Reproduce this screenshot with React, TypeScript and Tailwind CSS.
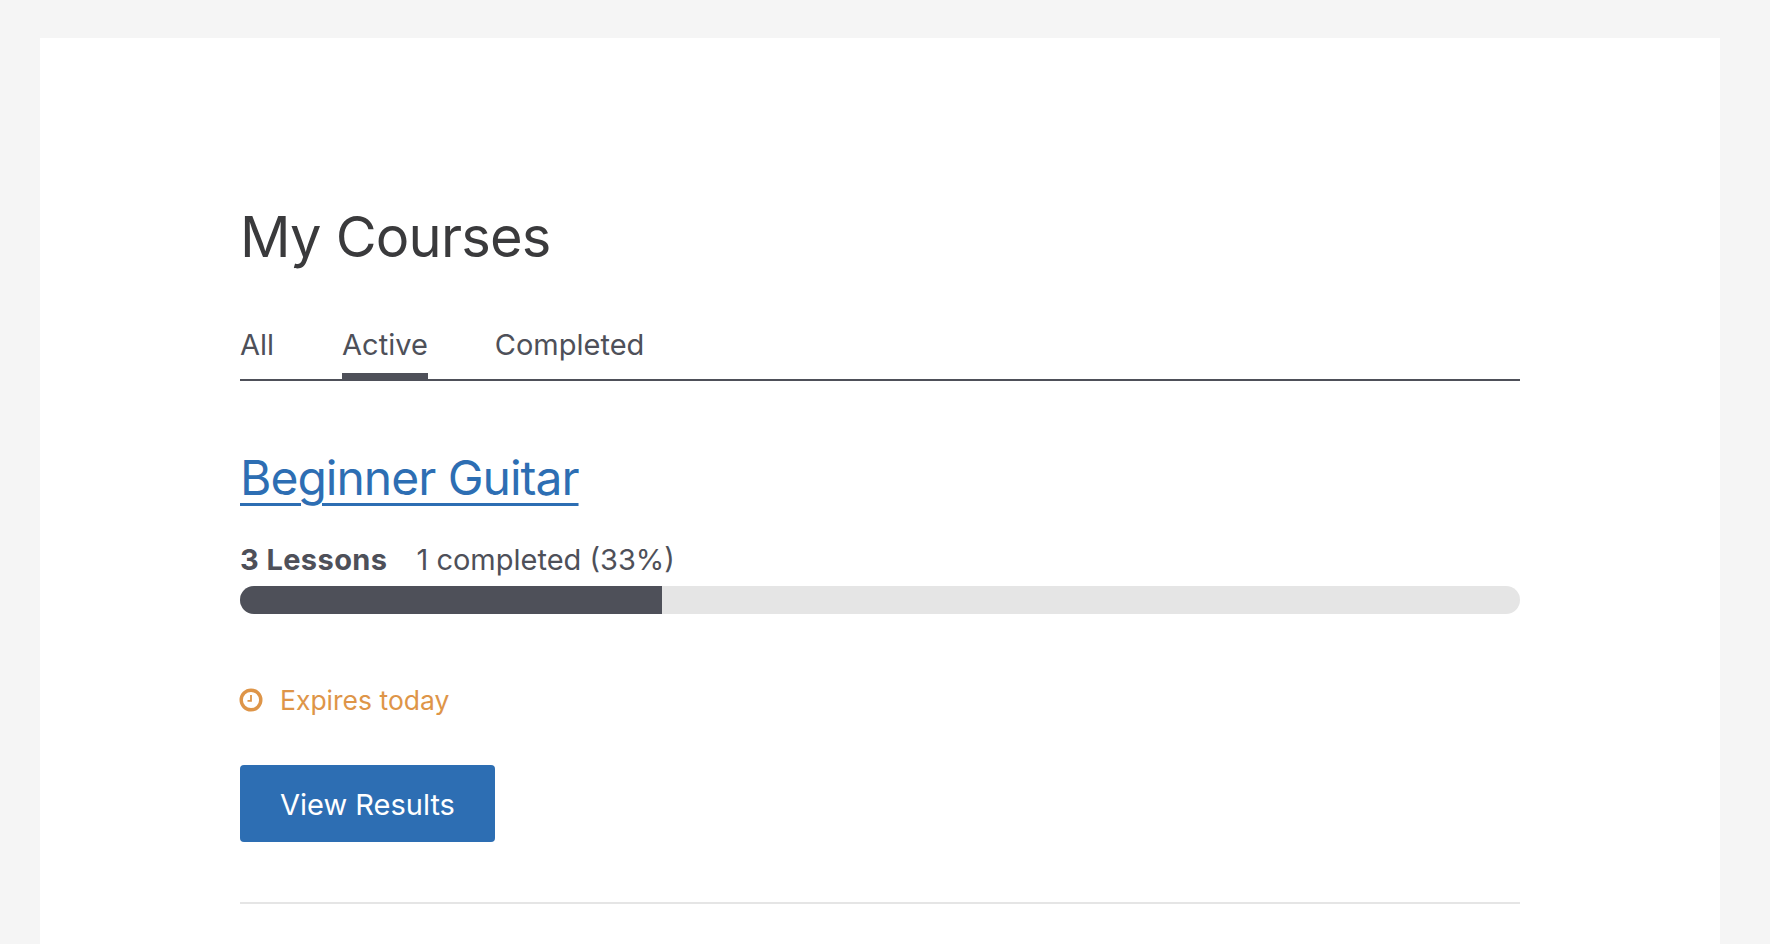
import React from 'react';

const tabs = ['All', 'Active', 'Completed'];

function ClockIcon() {
  return (
    <svg viewBox="0 0 24 24" className="w-[24px] h-[24px] shrink-0 -ml-px -mr-px" fill="none" stroke="#de9548">
      <circle cx="12" cy="12" r="9.8" strokeWidth="3.4" />
      <path d="M12 7v5.8H8.5" strokeWidth="1.8" />
    </svg>
  );
}

export default function App() {
  return (
    <div className="h-[944px] overflow-hidden bg-[#f5f5f5] pl-10 pr-[50px] pt-[38px] font-['Inter',sans-serif]">
      <div className="h-full bg-white px-[200px] pt-[165px]">
        <h1 className="text-[56px] leading-[68px] font-normal tracking-[-0.8px] text-[#3a3a3c]">My Courses</h1>

        <div className="mt-[56px] flex gap-[68px] border-b-2 border-[#4e5059] text-[29px] leading-[35px] text-[#4e5059]">
          {tabs.map((tab) => (
            <div
              key={tab}
              className={tab === 'Active' ? 'pb-[11px] -mb-px -mr-px border-b-[7px] border-[#4e5059]' : 'pb-[17px]'}
            >
              {tab}
            </div>
          ))}
        </div>

        <h2 className="mt-[68px] text-[48px] leading-[58px] tracking-[-1px]">
          <a href="#" className="text-[#2d6eb3] underline decoration-[3px] underline-offset-[8px]">
            Beginner Guitar
          </a>
        </h2>

        <div className="mt-[35px] flex gap-[29px] text-[29px] leading-[35px] text-[#4e5059]">
          <span className="font-bold tracking-[0.4px]">3 Lessons</span>
          <span>1 completed (33%)</span>
        </div>

        <div className="mt-[9px] h-7 rounded-full overflow-hidden bg-[#e5e5e5]">
          <div className="h-full w-[33%] bg-[#4e5059]" />
        </div>

        <div className="mt-[70px] flex items-center gap-[18px] text-[26.5px] leading-[32px] text-[#de9548]">
          <ClockIcon />
          <span>Expires today</span>
        </div>

        <button className="mt-[49px] block w-[255px] h-[77px] pt-[2px] rounded bg-[#2d6eb3] text-[29px] text-white">
          View Results
        </button>

        <hr className="mt-[60px] border-t-2 border-[#e5e5e5]" />
      </div>
    </div>
  );
}
